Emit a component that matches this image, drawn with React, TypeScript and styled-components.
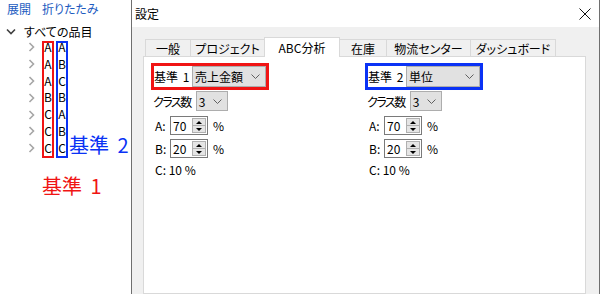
import React from "react";
import styled, { createGlobalStyle } from "styled-components";

const GlobalStyle = createGlobalStyle`
  html, body { margin: 0; padding: 0; background: #ffffff; }
  body {
    font-family: "Noto Sans CJK JP", "Noto Sans", sans-serif;
    font-size: 12px;
    color: #000;
    font-feature-settings: "palt";
  }
  * { box-sizing: border-box; }
`;

const RED = "#f01414";
const BLUE = "#0a32f5";

const Screen = styled.div`
  width: 600px;
  height: 294px;
  overflow: hidden;
  display: flex;
  background: #fff;
`;

/* ---------- left tree pane ---------- */
const TreePane = styled.div`
  width: 131px;
  flex: none;
  display: flex;
  flex-direction: column;
  background: #fff;
`;

const LinkBar = styled.div`
  display: flex;
  gap: 11px;
  height: 18px;
  line-height: 18px;
  padding-left: 7px;
`;

const Link = styled.span`
  color: #1c5bbf;
`;

const RootRow = styled.div`
  display: flex;
  align-items: center;
  height: 16px;
  margin-top: 5px;
  padding-left: 6px;
`;

const ExpandIcon = styled.span`
  width: 18px;
  display: flex;
  align-items: center;
`;

const ChildBlock = styled.div`
  display: flex;
  align-items: flex-start;
  margin-top: 2px;
  padding-left: 28px;
`;

const ChevronCol = styled.div`
  display: flex;
  flex-direction: column;
  width: 14px;
  margin-top: -2px;
`;

const ChevronCell = styled.div`
  height: 16.8px;
  display: flex;
  align-items: center;
`;

const LetterBox = styled.div<{ $color: string; $gap?: number }>`
  border: 2px solid ${(p) => p.$color};
  width: 12px;
  height: 117px;
  margin-left: ${(p) => p.$gap ?? 0}px;
  display: flex;
  flex-direction: column;
  text-align: center;
`;

const LetterList = styled.div`
  margin-top: -4px;
`;

const Letter = styled.div`
  height: 16.8px;
  line-height: 16.8px;
`;

const BigLabel = styled.div<{ $color: string }>`
  color: ${(p) => p.$color};
  font-size: 20px;
  line-height: 20px;
  white-space: pre;
  word-spacing: 4px;
  font-feature-settings: normal;
`;

const SideLabel = styled(BigLabel)`
  align-self: flex-end;
  margin-left: 1px;
  margin-bottom: 3px;
`;

const BottomLabel = styled(BigLabel)`
  margin-left: 42px;
  margin-top: 18px;
`;

/* ---------- dialog ---------- */
const Dialog = styled.div`
  flex: 1;
  display: flex;
  flex-direction: column;
  border-left: 1px solid #6f6f6f;
  border-right: 1px solid #6f6f6f;
`;

const TitleBar = styled.div`
  height: 27px;
  flex: none;
  background: #fff;
  display: flex;
  align-items: center;
  justify-content: space-between;
  padding: 0 8px 0 3px;
`;

const Client = styled.div`
  flex: 1;
  display: flex;
  flex-direction: column;
  background: #f0f0f0;
  padding: 10px 13px 0 11px;
`;

const TabStrip = styled.div`
  display: flex;
  align-items: flex-end;
  height: 19px;
  padding-left: 2px;
  flex: none;
`;

const Tab = styled.div<{ $w: number; $active?: boolean; $last?: boolean }>`
  width: ${(p) => p.$w}px;
  height: ${(p) => (p.$active ? 20 : 17)}px;
  margin-bottom: ${(p) => (p.$active ? -1 : 0)}px;
  margin-right: ${(p) => (p.$active ? -1 : 0)}px;
  position: relative;
  z-index: ${(p) => (p.$active ? 1 : 0)};
  background: ${(p) => (p.$active ? "#ffffff" : "#f0f0f0")};
  border: 1px solid #d9d9d9;
  border-bottom: none;
  border-right: ${(p) => (p.$active || p.$last ? "1px solid #d9d9d9" : "none")};
  display: flex;
  align-items: center;
  justify-content: center;
  white-space: nowrap;
`;

const Panel = styled.div`
  flex: 1;
  background: #fff;
  border: 1px solid #d9d9d9;
  padding: 6px 0 0 7px;
  display: grid;
  grid-template-columns: 214px 214px;
  align-content: start;
`;

const Column = styled.div`
  display: flex;
  flex-direction: column;
  align-items: flex-start;
`;

const CriteriaBox = styled.div<{ $color: string }>`
  border: 3px solid ${(p) => p.$color};
  width: 118px;
  height: 27px;
  display: flex;
  align-items: center;
  justify-content: space-between;
`;

const CriteriaLabel = styled.span`
  white-space: pre;
  word-spacing: 2px;
`;

const ComboBox = styled.div<{ $w: number; $h: number }>`
  width: ${(p) => p.$w}px;
  height: ${(p) => p.$h}px;
  background: #e1e1e1;
  border: 1px solid #adadad;
  display: flex;
  align-items: center;
  justify-content: space-between;
  padding: 0 5px 0 2px;
  white-space: nowrap;
`;

const ClassRow = styled.div`
  display: flex;
  align-items: center;
  gap: 5px;
  margin-top: 1px;
  padding-left: 2px;
`;

const ClassLabel = styled.span`
  letter-spacing: -1.5px;
`;

const SpinRow = styled.div<{ $mt: number }>`
  display: flex;
  align-items: center;
  margin-top: ${(p) => p.$mt}px;
  padding-left: 4px;
`;

const FieldLabel = styled.span`
  width: 15px;
`;

const SpinBox = styled.div`
  width: 38px;
  height: 19px;
  border: 1px solid #7a7a7a;
  background: #fff;
  display: flex;
  padding: 1px;
`;

const SpinValue = styled.span`
  flex: 1;
  padding-left: 1px;
  line-height: 15px;
`;

const Spinner = styled.div`
  width: 14px;
  display: flex;
  flex-direction: column;
  border: 1px solid #b0b0b0;
  background: #e5e5e5;
`;

const SpinButton = styled.div<{ $top?: boolean }>`
  flex: 1;
  display: flex;
  align-items: center;
  justify-content: center;
  border-bottom: ${(p) => (p.$top ? "1px solid #b0b0b0" : "none")};
`;

const Percent = styled.span`
  margin-left: 5px;
`;

const TextRow = styled.div`
  margin-top: 4px;
  padding-left: 4px;
  line-height: 16px;
  white-space: pre;
`;

/* ---------- icons ---------- */
const ChevronRight = () => (
  <svg width="7" height="10" viewBox="0 0 7 10">
    <path d="M1.5 1 L5.5 5 L1.5 9" fill="none" stroke="#a6a6a6" strokeWidth="1.6" />
  </svg>
);

const ChevronDownDark = () => (
  <svg width="10" height="7" viewBox="0 0 10 7">
    <path d="M1 1.5 L5 5.5 L9 1.5" fill="none" stroke="#404040" strokeWidth="1.6" />
  </svg>
);

const ComboArrow = () => (
  <svg width="9" height="5" viewBox="0 0 9 5">
    <path d="M0.5 0.5 L4.5 4.5 L8.5 0.5" fill="none" stroke="#606060" strokeWidth="1" />
  </svg>
);

const CloseIcon = () => (
  <svg width="12" height="12" viewBox="0 0 12 12">
    <path d="M0.5 0.5 L11.5 11.5 M11.5 0.5 L0.5 11.5" stroke="#111" strokeWidth="1" />
  </svg>
);

const TriUp = () => (
  <svg width="6" height="3" viewBox="0 0 6 3">
    <polygon points="0,3 3,0 6,3" fill="#000" />
  </svg>
);

const TriDown = () => (
  <svg width="6" height="3" viewBox="0 0 6 3">
    <polygon points="0,0 3,3 6,0" fill="#000" />
  </svg>
);

/* ---------- data ---------- */
const crit1 = ["A", "A", "A", "B", "C", "C", "C"];
const crit2 = ["A", "B", "C", "B", "A", "B", "C"];

const tabs = [
  { label: "一般", w: 45 },
  { label: "プロジェクト", w: 74 },
  { label: "ABC分析", w: 76, active: true },
  { label: "在庫", w: 47 },
  { label: "物流センター", w: 84 },
  { label: "ダッシュボード", w: 86, last: true },
];

const criteria = [
  { color: RED, label: "基準 1", value: "売上金額" },
  { color: BLUE, label: "基準 2", value: "単位" },
];

const Spin = ({ value }: { value: string }) => (
  <SpinBox>
    <SpinValue>{value}</SpinValue>
    <Spinner>
      <SpinButton $top>
        <TriUp />
      </SpinButton>
      <SpinButton>
        <TriDown />
      </SpinButton>
    </Spinner>
  </SpinBox>
);

export default function App() {
  return (
    <>
      <GlobalStyle />
      <Screen>
        <TreePane>
          <LinkBar>
            <Link>展開</Link>
            <Link>折りたたみ</Link>
          </LinkBar>
          <RootRow>
            <ExpandIcon>
              <ChevronDownDark />
            </ExpandIcon>
            <span>すべての品目</span>
          </RootRow>
          <ChildBlock>
            <ChevronCol>
              {crit1.map((_, i) => (
                <ChevronCell key={i}>
                  <ChevronRight />
                </ChevronCell>
              ))}
            </ChevronCol>
            <LetterBox $color={RED}>
              <LetterList>
                {crit1.map((c, i) => (
                  <Letter key={i}>{c}</Letter>
                ))}
              </LetterList>
            </LetterBox>
            <LetterBox $color={BLUE} $gap={2}>
              <LetterList>
                {crit2.map((c, i) => (
                  <Letter key={i}>{c}</Letter>
                ))}
              </LetterList>
            </LetterBox>
            <SideLabel $color={BLUE}>基準 2</SideLabel>
          </ChildBlock>
          <BottomLabel $color={RED}>基準 1</BottomLabel>
        </TreePane>

        <Dialog>
          <TitleBar>
            <span>設定</span>
            <CloseIcon />
          </TitleBar>
          <Client>
            <TabStrip>
              {tabs.map((t) => (
                <Tab key={t.label} $w={t.w} $active={t.active} $last={t.last}>
                  {t.label}
                </Tab>
              ))}
            </TabStrip>
            <Panel>
              {criteria.map((c) => (
                <Column key={c.label}>
                  <CriteriaBox $color={c.color}>
                    <CriteriaLabel>{c.label}</CriteriaLabel>
                    <ComboBox $w={74} $h={21}>
                      <span>{c.value}</span>
                      <ComboArrow />
                    </ComboBox>
                  </CriteriaBox>
                  <ClassRow>
                    <ClassLabel>クラス数</ClassLabel>
                    <ComboBox $w={32} $h={20}>
                      <span>3</span>
                      <ComboArrow />
                    </ComboBox>
                  </ClassRow>
                  <SpinRow $mt={5}>
                    <FieldLabel>A:</FieldLabel>
                    <Spin value="70" />
                    <Percent>%</Percent>
                  </SpinRow>
                  <SpinRow $mt={4}>
                    <FieldLabel>B:</FieldLabel>
                    <Spin value="20" />
                    <Percent>%</Percent>
                  </SpinRow>
                  <TextRow>C: 10 %</TextRow>
                </Column>
              ))}
            </Panel>
          </Client>
        </Dialog>
      </Screen>
    </>
  );
}
